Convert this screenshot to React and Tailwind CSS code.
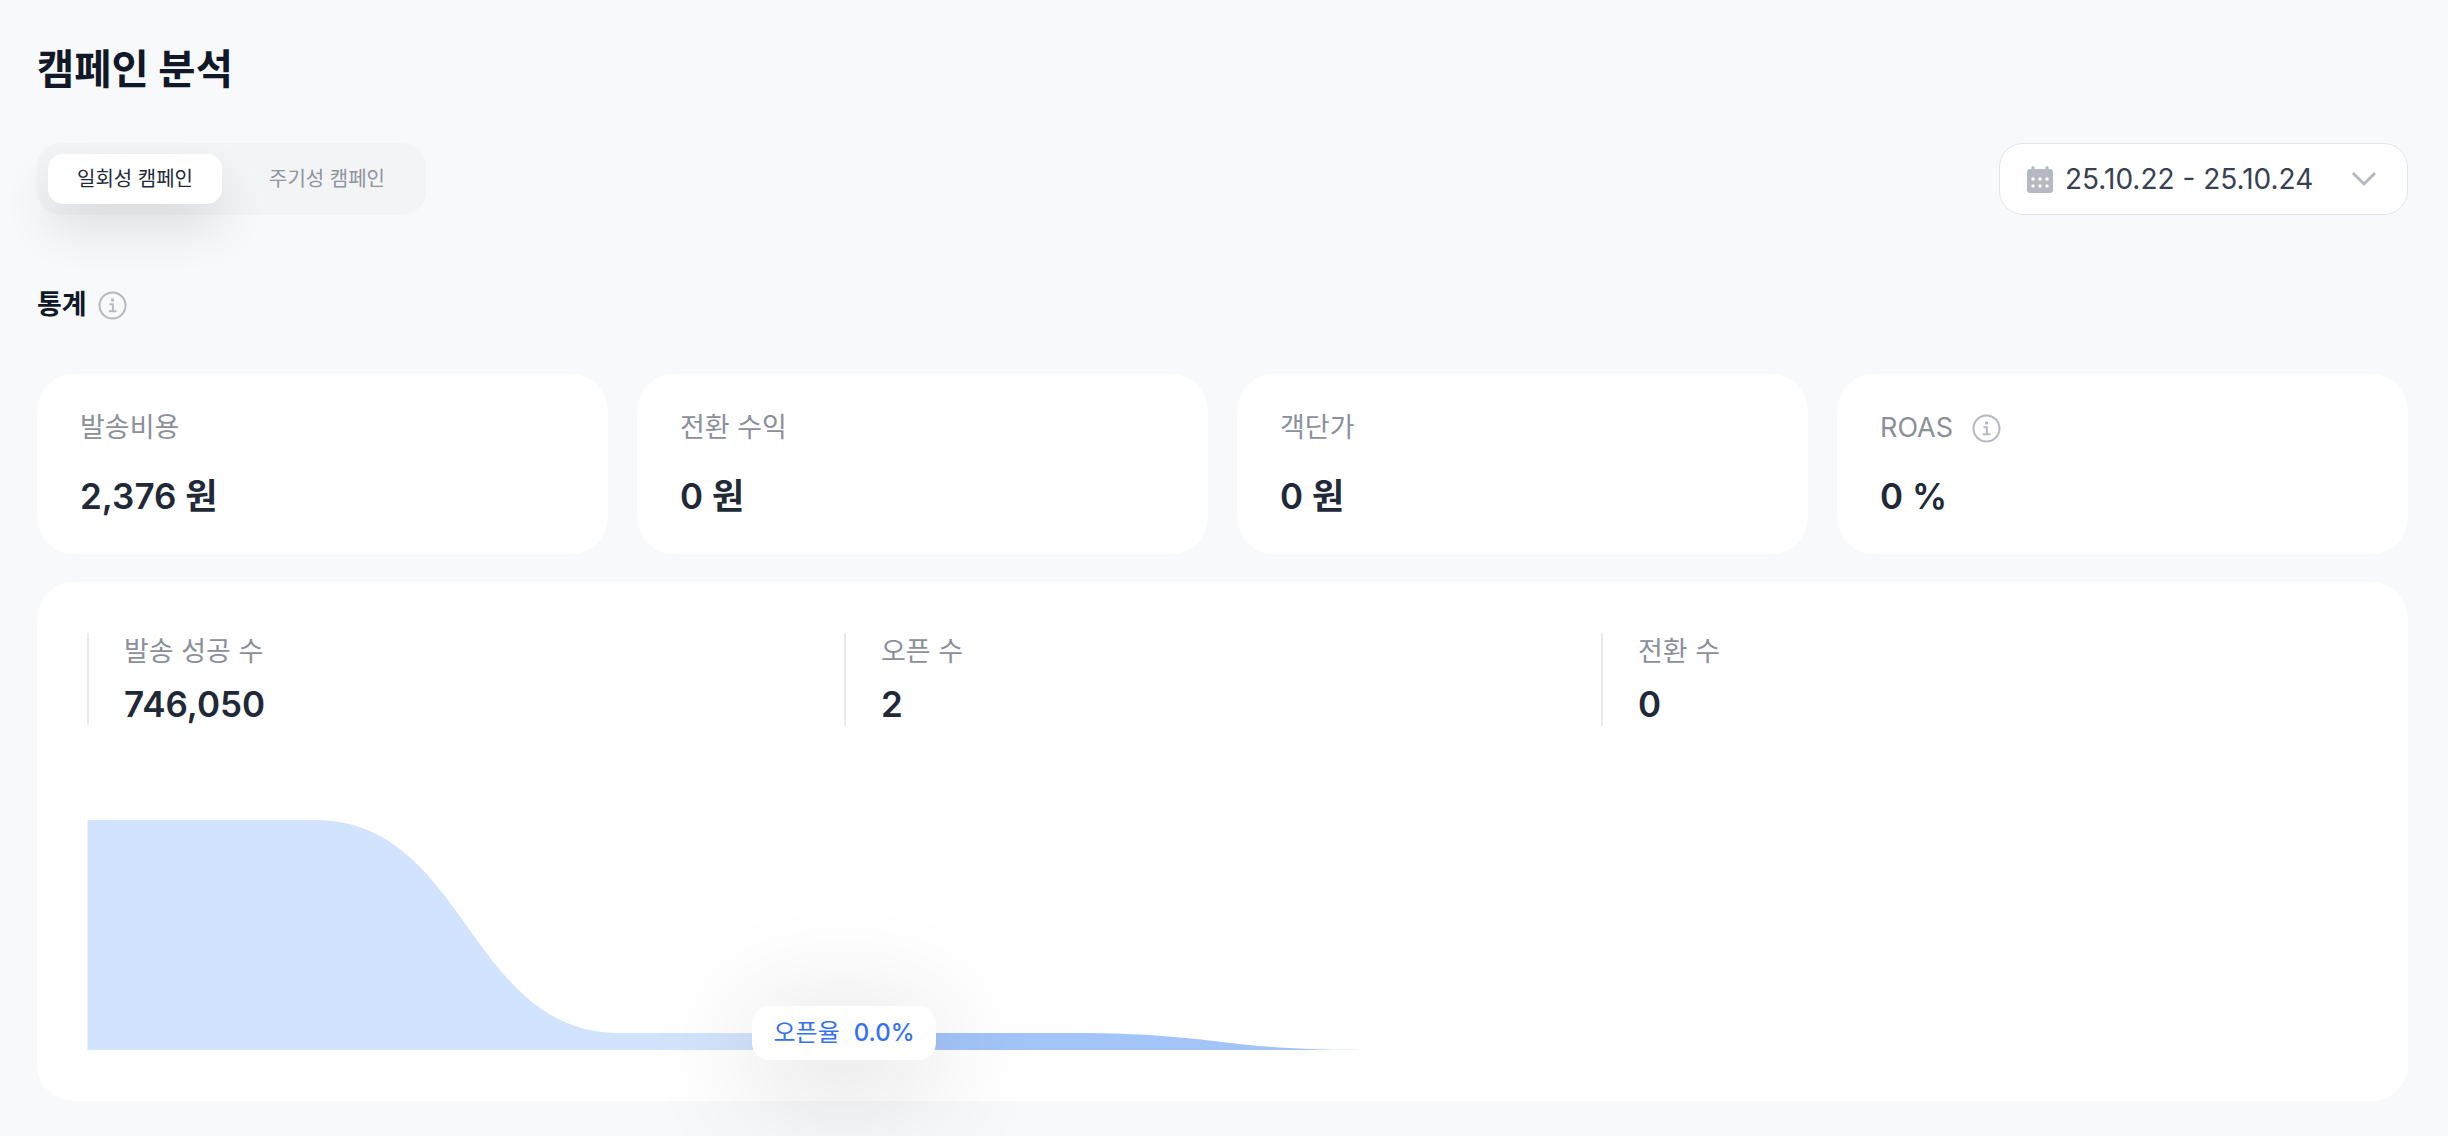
import React from 'react';

function InfoIcon({ className }) {
  return (
    <svg viewBox="0 0 29 29" className={className} fill="none">
      <circle cx="14.5" cy="14.5" r="13" stroke="#b7b9c2" strokeWidth="2" />
      <circle cx="14.5" cy="9" r="1.7" fill="#b7b9c2" />
      <path d="M11.5 13.2h3.4v6.6M10.8 20.2h7.6" stroke="#b7b9c2" strokeWidth="2" />
    </svg>
  );
}

function CalendarIcon() {
  return (
    <svg viewBox="0 0 26 27" className="w-[26px] h-[27px] shrink-0">
      <path d="M6 0a1.5 1.5 0 0 1 1.5 1.5V3h11V1.500a1.500 1.500 0 0 1 3 0V3H23a3 3 0 0 1 3 3v18a3 3 0 0 1-3 3H3a3 3 0 0 1-3-3V6a3 3 0 0 1 3-3h1.500V1.500A1.500 1.500 0 0 1 6 0z" fill="#b7b9c2" />
      {[6, 13, 20].map((x) =>
        [13, 20].map((y) => <rect key={x + '-' + y} x={x - 1.5} y={y - 1.5} width="3" height="3" rx="0.6" fill="#fff" />)
      )}
    </svg>
  );
}

function StatCard({ label, value, info }) {
  return (
    <div className="h-[180px] rounded-[37px] bg-white pl-[43px] pt-[35px]">
      <div className="flex items-center gap-[19px] h-[38px] text-[27px] leading-[38px] text-[#8b8f9a]">
        <span>{label}</span>
        {info && <InfoIcon className="w-[29px] h-[29px]" />}
      </div>
      <div className="mt-[26px] h-[46px] text-[35px] leading-[46px] font-semibold text-[#1f2937]">{value}</div>
    </div>
  );
}

function Metric({ label, value }) {
  return (
    <div className="h-[93px] border-l-2 border-[#e9eaee] pl-[35px]">
      <div className="pt-[1px] h-[35px] text-[27px] leading-[35px] text-[#8b8f9a]">{label}</div>
      <div className="mt-[14px] h-[44px] text-[35px] leading-[44px] font-semibold text-[#1f2937]">{value}</div>
    </div>
  );
}

export default function App() {
  return (
    <div className="relative h-[1136px] overflow-hidden bg-[#f8f9fb] pl-[37px] pr-[40px] pt-[45px] font-['Inter','Noto_Sans_CJK_KR',sans-serif]">
      <h1 className="h-[50px] text-[40.5px] leading-[50px] font-bold text-[#111827]">캠페인 분석</h1>

      <div className="mt-[48px] flex items-start justify-between">
        <div className="flex h-[72px] w-[389px] items-center gap-[18px] rounded-[24px] bg-[#f3f4f6] px-[11px]">
          <button className="h-[50px] w-[174px] rounded-[15px] bg-white text-[20px] font-normal text-[#1f2937] shadow-[0_24px_48px_rgba(0,0,0,0.11)]">일회성 캠페인</button>
          <button className="h-[50px] w-[174px] text-[20px] font-normal text-[#8f939e]">주기성 캠페인</button>
        </div>
        <div className="flex h-[72px] w-[409px] items-center rounded-[24px] border border-[#e2e5ea] bg-white pl-[27px] pr-[30px]">
          <CalendarIcon />
          <span className="ml-[12px] text-[28px] text-[#374151]">25.10.22 - 25.10.24</span>
          <svg viewBox="0 0 26 16" className="ml-auto w-[26px] h-[16px]" fill="none">
            <path d="M2 2l11 11L24 2" stroke="#b7b9c2" strokeWidth="3" />
          </svg>
        </div>
      </div>

      <div className="mt-[75px] flex h-[30px] items-center gap-[11px]">
        <span className="text-[27px] leading-[30px] font-semibold text-[#111827]">통계</span>
        <InfoIcon className="w-[29px] h-[29px]" />
      </div>

      <div className="mt-[54px] grid grid-cols-4 gap-[29px]">
        <StatCard label="발송비용" value="2,376 원" />
        <StatCard label="전환 수익" value="0 원" />
        <StatCard label="객단가" value="0 원" />
        <StatCard label="ROAS" value="0 %" info />
      </div>

      <div className="mt-[28px] h-[519px] rounded-[37px] bg-white px-[50px] pt-[51px]">
        <div className="grid grid-cols-3">
          <Metric label="발송 성공 수" value="746,050" />
          <Metric label="오픈 수" value="2" />
          <Metric label="전환 수" value="0" />
        </div>

        <div className="relative mt-[94px] h-[230px]">
          <svg viewBox="0 0 2270 230" className="block w-full h-[230px]">
            <path d="M0 0H227C380 0 380 213 532 213H757V230H0Z" fill="#d2e3fd" />
            <path d="M757 213H985C1130 213 1130 230 1275 230H757Z" fill="#a3c4f8" />
          </svg>
          <div className="absolute left-[665px] top-[186px] flex h-[54px] w-[184px] items-center justify-center gap-[14px] rounded-[17px] bg-white text-[24px] font-normal text-[#3370f5] shadow-[0_20px_120px_rgba(0,0,0,0.2)]">
            <span>오픈율</span>
            <span className="font-medium">0.0%</span>
          </div>
        </div>
      </div>
    </div>
  );
}
